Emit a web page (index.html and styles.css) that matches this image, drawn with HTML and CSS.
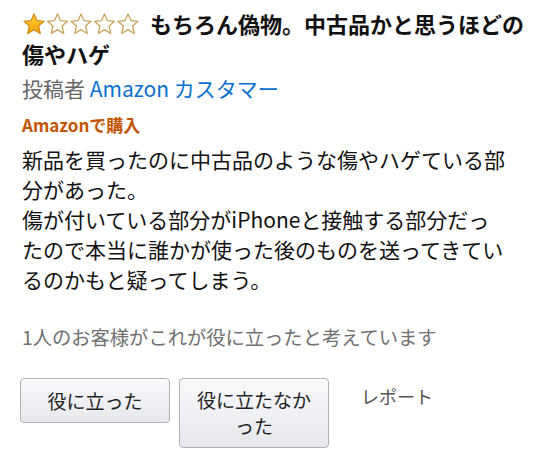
FILE: index.html
```html
<!DOCTYPE html>
<html lang="ja">
<head>
<meta charset="utf-8">
<link rel="stylesheet" href="styles.css">
</head>
<body>
<div class="review">
  <h1 class="title"><span class="stars"><svg width="118" height="24" viewBox="0 0 118 24">
    <defs>
      <linearGradient id="gold" x1="0" y1="0" x2="0" y2="1">
        <stop offset="0" stop-color="#ffd23a"/>
        <stop offset="1" stop-color="#f3a10e"/>
      </linearGradient>
    </defs>
    <polygon points="12,2 14.9,8.6 22,9.3 16.6,14 18.2,21.5 12,17.6 5.8,21.5 7.4,14 2,9.3 9.1,8.6" fill="url(#gold)" stroke="#d48f16" stroke-width="1.3" stroke-linejoin="round"/>
    <g fill="#fff" stroke="#c9a35e" stroke-width="1.3" stroke-linejoin="round">
      <polygon transform="translate(23.5 0)" points="12,2 14.9,8.6 22,9.3 16.6,14 18.2,21.5 12,17.6 5.8,21.5 7.4,14 2,9.3 9.1,8.6"/>
      <polygon transform="translate(47 0)" points="12,2 14.9,8.6 22,9.3 16.6,14 18.2,21.5 12,17.6 5.8,21.5 7.4,14 2,9.3 9.1,8.6"/>
      <polygon transform="translate(70.5 0)" points="12,2 14.9,8.6 22,9.3 16.6,14 18.2,21.5 12,17.6 5.8,21.5 7.4,14 2,9.3 9.1,8.6"/>
      <polygon transform="translate(94 0)" points="12,2 14.9,8.6 22,9.3 16.6,14 18.2,21.5 12,17.6 5.8,21.5 7.4,14 2,9.3 9.1,8.6"/>
    </g>
  </svg></span>もちろん偽物。中古品かと思うほどの傷やハゲ</h1>
  <div class="author"><span class="by">投稿者</span> <a class="name">Amazon カスタマー</a></div>
  <div class="verified">Amazonで購入</div>
  <p class="body">新品を買ったのに中古品のような傷やハゲている部<br>分があった。<br>傷が付いている部分がiPhoneと接触する部分だっ<br>たので本当に誰かが使った後のものを送ってきてい<br>るのかもと疑ってしまう。</p>
  <div class="helpful">1人のお客様がこれが役に立ったと考えています</div>
  <div class="actions">
    <button class="btn">役に立った</button>
    <button class="btn">役に立たなかった</button>
    <span class="report">レポート</span>
  </div>
</div>
</body>
</html>
```
FILE: styles.css
```css
html, body {
  margin: 0;
  padding: 0;
  background: #fff;
}
body {
  font-family: "Noto Sans CJK JP", "Noto Sans", sans-serif;
  color: #111;
}
.review {
  padding: 8px 20px 0 22px;
}
.title {
  margin: 0;
  font-size: 22px;
  line-height: 30px;
  font-weight: bold;
  color: #111;
  width: 520px;
}
.stars {
  display: inline-block;
  vertical-align: -3px;
  margin-right: 10px;
  height: 24px;
}
.stars svg {
  display: block;
}
.author {
  margin-top: 5px;
  font-size: 21px;
  line-height: 30px;
}
.by {
  color: #666;
}
.name {
  color: #0a6fd0;
}
.verified {
  margin-top: 11px;
  font-size: 17px;
  line-height: 22px;
  font-weight: bold;
  color: #c45500;
}
.body {
  margin: 8px 0 0;
  font-size: 21px;
  line-height: 30px;
  color: #111;
}
.helpful {
  margin-top: 31px;
  font-size: 19.3px;
  line-height: 24px;
  color: #707070;
}
.actions {
  margin-top: 29px;
  margin-left: -2px;
  display: flex;
  align-items: flex-start;
  gap: 9px;
}
.btn {
  width: 150px;
  min-height: 45px;
  padding: 8px 16px;
  font-family: inherit;
  font-size: 19px;
  line-height: 26px;
  color: #222;
  background: linear-gradient(#f8f9fb, #e6e8ec);
  border: 1px solid #adb1b8;
  border-radius: 4px;
  box-shadow: 0 1px 0 rgba(255,255,255,0.6) inset;
}
.report {
  margin-left: 23px;
  padding-top: 5px;
  font-size: 18px;
  line-height: 26px;
  color: #555;
}
```
